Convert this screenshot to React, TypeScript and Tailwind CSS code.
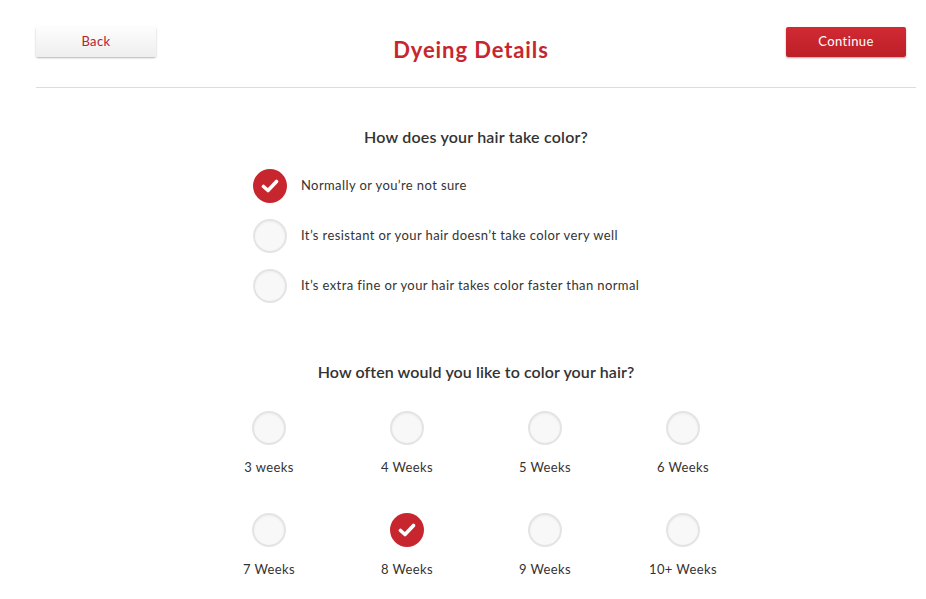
import { useState } from 'react';

const HAIR_TYPES = [
  'Normally or you\u2019re not sure',
  'It\u2019s resistant or your hair doesn\u2019t take color very well',
  'It\u2019s extra fine or your hair takes color faster than normal',
];

const FREQUENCIES = ['3 weeks', '4 Weeks', '5 Weeks', '6 Weeks', '7 Weeks', '8 Weeks', '9 Weeks', '10+ Weeks'];

function Radio({ checked }: { checked: boolean }) {
  if (checked) {
    return (
      <span className="flex w-[34px] h-[34px] shrink-0 items-center justify-center rounded-full bg-[#c8262f]">
        <svg width="18" height="14" viewBox="0 0 18 14">
          <path d="M2.5 7.5 L7 11.5 L15.5 2.5" fill="none" stroke="#fff" strokeWidth="3.6" strokeLinecap="round" strokeLinejoin="round" />
        </svg>
      </span>
    );
  }
  return (
    <span className="block w-[34px] h-[34px] shrink-0 rounded-full border-2 border-[#e4e4e4] bg-[#f8f8f8] shadow-[inset_0_1px_2px_rgba(0,0,0,0.05)]" />
  );
}

export default function App() {
  const [hairType, setHairType] = useState(0);
  const [freq, setFreq] = useState(5);

  return (
    <div className="w-[926px] h-[599px] bg-white pl-[36px] pr-[10px] pt-[27px] text-[#333]" style={{ fontFamily: 'Lato, "Open Sans", sans-serif' }}>
      {/* Header */}
      <div className="flex items-start justify-between h-[61px] border-b border-[#dcdcdc]">
        <button className="w-[120px] h-[30px] rounded-[2px] bg-gradient-to-b from-[#fdfdfd] to-[#eeeeee] text-[13px] tracking-[0.4px] text-[#b8232c] shadow-[0_1px_2px_rgba(0,0,0,0.3)]">
          Back
        </button>
        <h1 className="mt-[6px] text-[22px] font-bold text-[#c8262f] tracking-[0.9px]">Dyeing Details</h1>
        <button className="mr-[10px] w-[120px] h-[30px] rounded-[2px] bg-gradient-to-b from-[#d12a33] to-[#bd1f28] text-[13px] tracking-[0.4px] text-white shadow-[0_1px_2px_rgba(0,0,0,0.35)]">
          Continue
        </button>
      </div>

      {/* Question 1 */}
      <div className="flex flex-col items-center">
        <h2 className="mt-[37px] text-[16px] font-semibold tracking-[0.2px] text-[#333]">How does your hair take color?</h2>
        <div className="mt-[20px] flex flex-col gap-[16px] self-start ml-[217px]">
          {HAIR_TYPES.map((label, i) => (
            <button key={label} onClick={() => setHairType(i)} className="flex items-center gap-[14px] text-left">
              <Radio checked={hairType === i} />
              <span className="text-[13px] tracking-[0.4px] whitespace-nowrap text-[#333]">{label}</span>
            </button>
          ))}
        </div>

        {/* Question 2 */}
        <h2 className="mt-[57px] text-[16px] font-semibold tracking-[0.1px] text-[#333]">How often would you like to color your hair?</h2>
        <div className="mt-[27px] grid grid-cols-4 w-[552px] gap-y-[35px]">
          {FREQUENCIES.map((label, i) => (
            <button key={label} onClick={() => setFreq(i)} className="flex flex-col items-center">
              <Radio checked={freq === i} />
              <span className="mt-[13px] text-[13px] tracking-[0.4px] text-[#333]">{label}</span>
            </button>
          ))}
        </div>
      </div>
    </div>
  );
}
